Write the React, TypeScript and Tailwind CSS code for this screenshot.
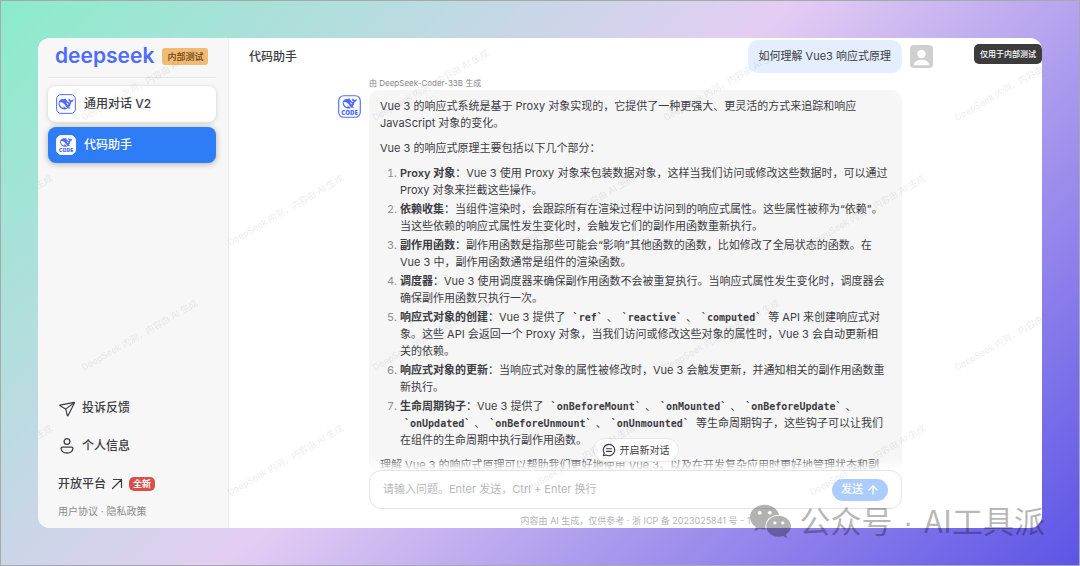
import React from "react";
import { FaWeixin } from "react-icons/fa";
import { ArrowUp, Send } from "lucide-react";
import { clsx } from "clsx";

const WATERMARK = "DeepSeek 内测，内容由 AI 生成";

const Whale = () => (
  <path
    fill="currentColor"
    d="M23.748 4.482c-.254-.124-.364.113-.512.234-.051.039-.094.09-.137.136-.372.397-.806.657-1.373.626-.829-.046-1.537.214-2.163.848-.133-.782-.575-1.248-1.247-1.548-.352-.156-.708-.311-.955-.65-.172-.241-.219-.51-.305-.774-.055-.16-.11-.323-.293-.35-.2-.031-.278.136-.356.276-.313.572-.434 1.202-.422 1.84.027 1.436.633 2.58 1.838 3.393.137.093.172.187.129.323-.082.28-.18.552-.266.833-.055.179-.137.217-.329.14a5.526 5.526 0 01-1.736-1.18c-.857-.828-1.631-1.742-2.597-2.458a11.365 11.365 0 00-.689-.471c-.985-.957.13-1.743.388-1.836.27-.098.093-.432-.779-.428-.872.004-1.67.295-2.687.684a3.055 3.055 0 01-.465.137 9.597 9.597 0 00-2.883-.102c-1.885.21-3.39 1.102-4.497 2.623C.082 8.606-.231 10.684.152 12.85c.403 2.284 1.569 4.175 3.36 5.653 1.858 1.533 3.997 2.284 6.438 2.14 1.482-.085 3.133-.284 4.994-1.86.47.234.962.327 1.78.397.63.059 1.236-.03 1.705-.128.735-.156.684-.837.419-.961-2.155-1.004-1.682-.595-2.113-.926 1.096-1.296 2.746-2.642 3.392-7.003.05-.347.007-.565 0-.845-.004-.17.035-.237.23-.256a4.173 4.173 0 001.545-.475c1.396-.763 1.96-2.015 2.093-3.517.02-.23-.004-.467-.247-.588zM11.581 18c-2.089-1.642-3.102-2.183-3.52-2.16-.392.024-.321.471-.235.763.09.288.207.486.371.739.114.167.192.416-.113.603-.673.416-1.842-.14-1.897-.167-1.361-.802-2.5-1.86-3.301-3.307-.774-1.393-1.224-2.887-1.298-4.482-.02-.386.093-.522.477-.592a4.696 4.696 0 011.529-.039c2.132.312 3.946 1.265 5.468 2.774.868.86 1.525 1.887 2.202 2.891.72 1.066 1.494 2.082 2.48 2.914.348.292.625.514.891.677-.802.09-2.14.11-3.054-.614zm1-6.44a.306.306 0 01.415-.287.302.302 0 01.2.288.306.306 0 01-.31.307.303.303 0 01-.304-.308zm3.11 1.596c-.2.081-.399.151-.59.16a1.245 1.245 0 01-.798-.254c-.274-.23-.47-.358-.552-.758a1.73 1.73 0 01.016-.588c.07-.327-.008-.537-.239-.727-.187-.156-.426-.199-.688-.199a.559.559 0 01-.254-.078c-.11-.054-.2-.19-.114-.358.028-.054.16-.186.192-.21.356-.202.767-.136 1.146.016.352.144.618.408 1.001.782.391.451.462.576.685.914.176.265.336.537.445.848.067.195-.019.354-.25.452z"
  />
);

interface BotIconProps {
  code?: boolean;
  filled?: boolean;
  className?: string;
}

const BotIcon: React.FC<BotIconProps> = ({ code = false, filled = false, className }) => (
  <svg viewBox="0 0 32 32" aria-hidden="true" className={clsx("shrink-0 text-[#4d6bfe]", className)}>
    <rect
      x="1"
      y="1"
      width="30"
      height="30"
      rx="7"
      fill="white"
      stroke={filled ? "white" : "currentColor"}
      strokeWidth="1.6"
    />
    <g transform={code ? "translate(6.5 2) scale(0.82)" : "translate(4 4)"}>
      <Whale />
    </g>
    {code && (
      <text
        x="16"
        y="27.5"
        textAnchor="middle"
        fill="currentColor"
        fontFamily="Open Sans, sans-serif"
        fontWeight="800"
        fontSize="8.5"
      >
        CODE
      </text>
    )}
  </svg>
);

const UserIcon = () => (
  <svg viewBox="0 0 18 18" aria-hidden="true" className="size-[18px]" fill="none" stroke="currentColor" strokeWidth="1.3">
    <circle cx="9" cy="4.5" r="2.9" />
    <path d="M4.200 10.200h9.600c.8 0 1.200.6 1.100 1.300-.4 2.900-2.600 4.500-5.900 4.500s-5.500-1.600-5.900-4.500c-.1-.7.3-1.300 1.100-1.300z" />
  </svg>
);

const OpenIcon = () => (
  <svg viewBox="0 0 12 12" aria-hidden="true" className="ml-[5px] size-3" fill="none" stroke="currentColor" strokeWidth="1.2" strokeLinecap="round">
    <path d="M1.500 10.500L10.500 1.500M2.500 1.500h8v8" />
  </svg>
);

const ChatIcon = () => (
  <svg viewBox="0 0 16 16" aria-hidden="true" className="size-[14px]" fill="none" stroke="currentColor" strokeWidth="1.3" strokeLinecap="round" strokeLinejoin="round">
    <path d="M8 1.500a6.500 6.500 0 1 1-3.100 12.200L1.600 14.400l.9-3A6.500 6.500 0 0 1 8 1.500z" />
    <path d="M5 6.600h6M5 9.600h6" />
  </svg>
);

const Avatar = () => (
  <svg viewBox="0 0 23 23" role="img" aria-label="用户" className="mt-[5px] size-[23px]">
    <rect width="23" height="23" rx="4" fill="#cfcfcf" />
    <circle cx="11.5" cy="9" r="4.2" fill="white" />
    <path d="M3.500 20.300c.8-4 3.800-5.300 8-5.300s7.200 1.300 8 5.300z" fill="white" />
  </svg>
);

const Code = ({ children }: { children: string }) => (
  <code className="mx-1 font-['DejaVu_Sans_Mono',monospace] text-[10px] font-semibold">`{children}`</code>
);

const steps: { title: string; body: React.ReactNode }[] = [
  {
    title: "Proxy 对象",
    body: "Vue 3 使用 Proxy 对象来包装数据对象，这样当我们访问或修改这些数据时，可以通过 Proxy 对象来拦截这些操作。",
  },
  {
    title: "依赖收集",
    body: "当组件渲染时，会跟踪所有在渲染过程中访问到的响应式属性。这些属性被称为“依赖”。当这些依赖的响应式属性发生变化时，会触发它们的副作用函数重新执行。",
  },
  {
    title: "副作用函数",
    body: "副作用函数是指那些可能会“影响”其他函数的函数，比如修改了全局状态的函数。在 Vue 3 中，副作用函数通常是组件的渲染函数。",
  },
  {
    title: "调度器",
    body: "Vue 3 使用调度器来确保副作用函数不会被重复执行。当响应式属性发生变化时，调度器会确保副作用函数只执行一次。",
  },
  {
    title: "响应式对象的创建",
    body: (
      <>
        Vue 3 提供了 <Code>ref</Code>、<Code>reactive</Code>、<Code>computed</Code> 等 API
        来创建响应式对象。这些 API 会返回一个 Proxy 对象，当我们访问或修改这些对象的属性时，Vue 3
        会自动更新相关的依赖。
      </>
    ),
  },
  {
    title: "响应式对象的更新",
    body: "当响应式对象的属性被修改时，Vue 3 会触发更新，并通知相关的副作用函数重新执行。",
  },
  {
    title: "生命周期钩子",
    body: (
      <>
        Vue 3 提供了 <Code>onBeforeMount</Code>、<Code>onMounted</Code>、<Code>onBeforeUpdate</Code>、
        <Code>onUpdated</Code>、<Code>onBeforeUnmount</Code>、<Code>onUnmounted</Code>{" "}
        等生命周期钩子，这些钩子可以让我们在组件的生命周期中执行副作用函数。
      </>
    ),
  },
];

const Sidebar = () => (
  <aside className="flex w-[191px] shrink-0 flex-col border-r border-[#ececec] bg-[#f7f7f7] pr-3 pl-[10px] text-[#3c3c43]">
    <div className="flex h-[40px] items-center gap-2 border-b border-[#e6e6e8] pb-[3px] pl-[7px]">
      <span className="text-[21px] leading-6 font-semibold text-[#4d6bfe]">deepseek</span>
      <span className="rounded-[3px] bg-[#f0bb72] px-[5px] text-[9px] leading-[17px] font-medium whitespace-nowrap text-[#704214]">
        内部测试
      </span>
    </div>

    <nav className="mt-2 flex flex-col gap-[5px] text-xs font-medium">
      <button className="flex h-9 items-center gap-2 rounded-lg bg-white pl-2 shadow-[0_1px_5px_rgba(0,0,0,0.16)]">
        <BotIcon className="size-5" />
        通用对话 V2
      </button>
      <button className="flex h-9 items-center gap-2 rounded-lg bg-[#2e7cf6] pl-2 text-white shadow-[0_1px_6px_rgba(0,0,0,0.3)]">
        <BotIcon code filled className="size-5" />
        代码助手
      </button>
    </nav>

    <div className="mt-auto flex flex-col items-start pl-[10px] text-xs font-medium">
      <button className="flex h-[38px] items-center gap-[7px]">
        <Send className="size-[17px] rotate-[8deg]" strokeWidth={1.6} />
        投诉反馈
      </button>
      <button className="flex h-[38px] items-center gap-[6px]">
        <UserIcon />
        个人信息
      </button>
      <a href="#platform" className="mb-px flex h-[38px] items-center">
        开放平台
        <OpenIcon />
        <span className="ml-[6px] rounded-[5px] bg-[#dc4f47] px-1 text-[9px] leading-[14px] font-bold text-white">
          全新
        </span>
      </a>
      <p className="mb-[10px] text-[10px] leading-[14px] font-normal text-[#8a8a8a]">
        <a href="#terms">用户协议</a> · <a href="#privacy">隐私政策</a>
      </p>
    </div>
  </aside>
);

const Conversation = () => (
  <div className="mx-auto grid w-full max-w-[595px] grid-cols-[23px_1fr_23px] gap-x-2 pt-[2px] text-[11px] leading-[17px] text-[#3c3c43]">
    <p className="col-start-2 justify-self-end rounded-[10px] bg-[#e4eeff] px-[11px] py-2">
      如何理解 Vue3 响应式原理
    </p>
    <Avatar />

    <BotIcon code className="col-start-1 row-start-2 mt-[22px] size-[23px]" />
    <div className="col-start-2 pt-1">
      <p className="text-[8px] leading-[13px] text-[#85858a]">由 DeepSeek-Coder-33B 生成</p>
      <div className="space-y-2 rounded-[10px] bg-[#f6f6f6] py-2 pr-[14px] pl-[11px]">
        <p>
          Vue 3 的响应式系统是基于 Proxy 对象实现的，它提供了一种更强大、更灵活的方式来追踪和响应
          JavaScript 对象的变化。
        </p>
        <p>Vue 3 的响应式原理主要包括以下几个部分：</p>
        <ol className="list-decimal space-y-[2px] pl-5 marker:text-[#8c8c91]">
          {steps.map((step) => (
            <li key={step.title}>
              <strong className="font-semibold">{step.title}</strong>：{step.body}
            </li>
          ))}
        </ol>
        <p>理解 Vue 3 的响应式原理可以帮助我们更好地使用 Vue 3，以及在开发复杂应用时更好地管理状态和副作用。</p>
      </div>
    </div>
  </div>
);

const Composer = () => (
  <div className="mx-auto w-full max-w-[595px] px-[31px]">
    <form
      className="flex h-[39px] items-center rounded-xl border border-[#e4e4e6] bg-white px-[13px]"
      onSubmit={(e) => e.preventDefault()}
    >
      <input
        aria-label="输入问题"
        placeholder="请输入问题。Enter 发送，Ctrl + Enter 换行"
        className="min-w-0 flex-1 text-[11px] outline-none placeholder:text-[#b8b8bc]"
      />
      <button className="flex h-[22px] items-center gap-[3px] rounded-full bg-[#acccfd] pr-2 pl-[9px] text-[11px] font-medium text-white">
        发送
        <ArrowUp className="size-[14px]" strokeWidth={2.2} />
      </button>
    </form>
    <p className="pt-1 text-center text-[9px] leading-[15px] whitespace-nowrap text-[#b4b4b8]">
      内容由 AI 生成，仅供参考 · 浙 ICP 备 2023025841 号 - 1
    </p>
  </div>
);

const Watermark = () => (
  <svg aria-hidden="true" className="pointer-events-none absolute inset-0 size-full">
    <defs>
      <pattern id="watermark" x="38" y="0" width="291" height="250" patternUnits="userSpaceOnUse">
        <g fill="#3c3c5a" fillOpacity="0.1" fontSize="9">
          <text transform="translate(8 83) rotate(-30)">{WATERMARK}</text>
          <text transform="translate(154 208) rotate(-30)">{WATERMARK}</text>
        </g>
      </pattern>
    </defs>
    <rect width="100%" height="100%" fill="url(#watermark)" />
  </svg>
);

export default function App() {
  return (
    <div className="relative flex h-screen border border-[#a5a9ab] bg-[linear-gradient(135deg,#8aeccb_0%,#e4cdf3_48%,#5c54e6_100%)] p-[37px] font-['Inter','Noto_Sans_CJK_SC',sans-serif]">
      <div className="relative flex min-w-0 flex-1 overflow-hidden rounded-xl bg-white">
        <Sidebar />

        <main className="relative flex min-w-0 flex-1 flex-col">
          <h1 className="absolute top-[10px] left-5 text-xs leading-[18px] font-medium text-[#3c3c43]">代码助手</h1>
          <span className="absolute top-[6px] right-0 rounded-[5px] bg-[#3c3c3c] px-[6px] text-[8px] leading-5 font-medium text-white">
            仅用于内部测试
          </span>

          <div className="relative min-h-0 flex-1 overflow-hidden">
            <Conversation />
            <div className="absolute inset-x-0 bottom-0 h-3 bg-linear-to-b from-white/0 to-white" />
            <button className="absolute bottom-2 left-1/2 flex h-6 -translate-x-1/2 items-center gap-1 rounded-full border border-[#e8e8ea] bg-white px-2 text-[10px] whitespace-nowrap text-[#3c3c43]">
              <ChatIcon />
              开启新对话
            </button>
          </div>
          <Composer />
        </main>

        <Watermark />
      </div>

      <div className="pointer-events-none absolute right-[34px] bottom-[22px] flex items-center gap-2 text-black/30">
        <FaWeixin className="size-[43px]" />
        <span className="font-['Noto_Sans_CJK_SC',sans-serif] text-[31px] leading-10 whitespace-nowrap">
          公众号<span className="px-[2px] font-['Liberation_Sans',sans-serif]"> · </span>AI工具派
        </span>
      </div>
    </div>
  );
}
